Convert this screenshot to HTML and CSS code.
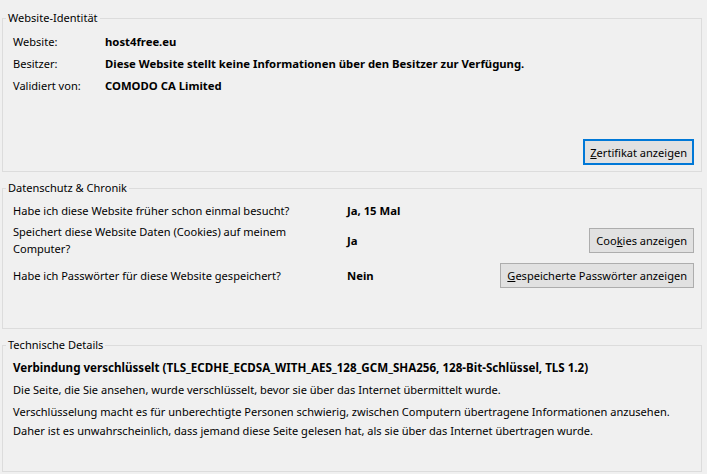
FILE: index.html
```html
<!DOCTYPE html>
<html lang="de">
<head>
    <meta charset="UTF-8">
    <link rel="stylesheet" href="styles.css">
</head>
<body>
    <fieldset class="group group-identity">
        <legend>Website-Identität</legend>
        <div class="identity-rows">
            <div class="label">Website:</div>
            <div class="value">host4free.eu</div>
            <div class="label">Besitzer:</div>
            <div class="value">Diese Website stellt keine Informationen über den Besitzer zur Verfügung.</div>
            <div class="label">Validiert von:</div>
            <div class="value">COMODO CA Limited</div>
        </div>
        <div class="actions">
            <button class="btn btn-focus"><u>Z</u>ertifikat anzeigen</button>
        </div>
    </fieldset>

    <fieldset class="group group-privacy">
        <legend>Datenschutz &amp; Chronik</legend>
        <div class="privacy-row row-visits">
            <div class="question">Habe ich diese Website früher schon einmal besucht?</div>
            <div class="answer">Ja, 15 Mal</div>
        </div>
        <div class="privacy-row row-cookies">
            <div class="question">Speichert diese Website Daten (Cookies) auf meinem<br>Computer?</div>
            <div class="answer">Ja</div>
            <button class="btn">Coo<u>k</u>ies anzeigen</button>
        </div>
        <div class="privacy-row row-passwords">
            <div class="question">Habe ich Passwörter für diese Website gespeichert?</div>
            <div class="answer">Nein</div>
            <button class="btn"><u>G</u>espeicherte Passwörter anzeigen</button>
        </div>
    </fieldset>

    <fieldset class="group group-tech">
        <legend>Technische Details</legend>
        <p class="tech-head">Verbindung verschlüsselt (TLS_ECDHE_ECDSA_WITH_AES_128_GCM_SHA256, 128-Bit-Schlüssel, TLS 1.2)</p>
        <p>Die Seite, die Sie ansehen, wurde verschlüsselt, bevor sie über das Internet übermittelt wurde.</p>
        <p>Verschlüsselung macht es für unberechtigte Personen schwierig, zwischen Computern übertragene Informationen anzusehen.<br>Daher ist es unwahrscheinlich, dass jemand diese Seite gelesen hat, als sie über das Internet übertragen wurde.</p>
    </fieldset>
</body>
</html>
```

FILE: styles.css
```css
html, body {
    margin: 0;
    background-color: #f0f0f0;
}

body {
    padding-top: 10px;
    font-family: "Noto Sans", "Open Sans", sans-serif;
    font-size: 11.05px;
    color: #000;
}

.group {
    margin: 0 5px 0 2px;
    padding: 0 7px 0 10px;
    border: 1px solid #dcdcdc;
    min-width: 0;
}

.group legend {
    margin-left: -7px;
    padding: 0 2px;
    line-height: 16px;
}

/* Website-Identitaet */
.identity-rows {
    display: grid;
    grid-template-columns: 92px 1fr;
    grid-auto-rows: 22px;
    align-items: center;
    padding-top: 4px;
}

.identity-rows .value {
    font-weight: bold;
    font-size: 11.3px;
}

.actions {
    display: flex;
    justify-content: flex-end;
    margin-top: 43px;
    padding-bottom: 6px;
}

.btn {
    font-family: inherit;
    font-size: 11.05px;
    color: #000;
    background-color: #e1e1e1;
    border: 1px solid #adadad;
    height: 25px;
    padding: 0 6px;
    margin: 0;
}

.btn-focus {
    height: 26px;
    border: 2px solid #0078d7;
    padding: 0 5px;
}

/* Datenschutz & Chronik */
.group-privacy {
    margin-top: 8px;
    padding-top: 2px;
    padding-bottom: 36px;
}

.privacy-row {
    display: flex;
    align-items: center;
}

.row-visits {
    height: 24px;
}

.row-cookies {
    height: 36px;
}

.row-passwords {
    height: 34px;
}

.question {
    width: 334px;
    line-height: 17px;
}

.answer {
    flex: 1;
    font-weight: bold;
    font-size: 11.3px;
}

/* Technische Details */
.group-tech {
    margin-top: 8px;
    padding-top: 5px;
    padding-bottom: 28px;
}

.group-tech p {
    margin: 0 0 3px;
    line-height: 19px;
}

.tech-head {
    font-weight: bold;
    font-size: 11.6px;
}
```
